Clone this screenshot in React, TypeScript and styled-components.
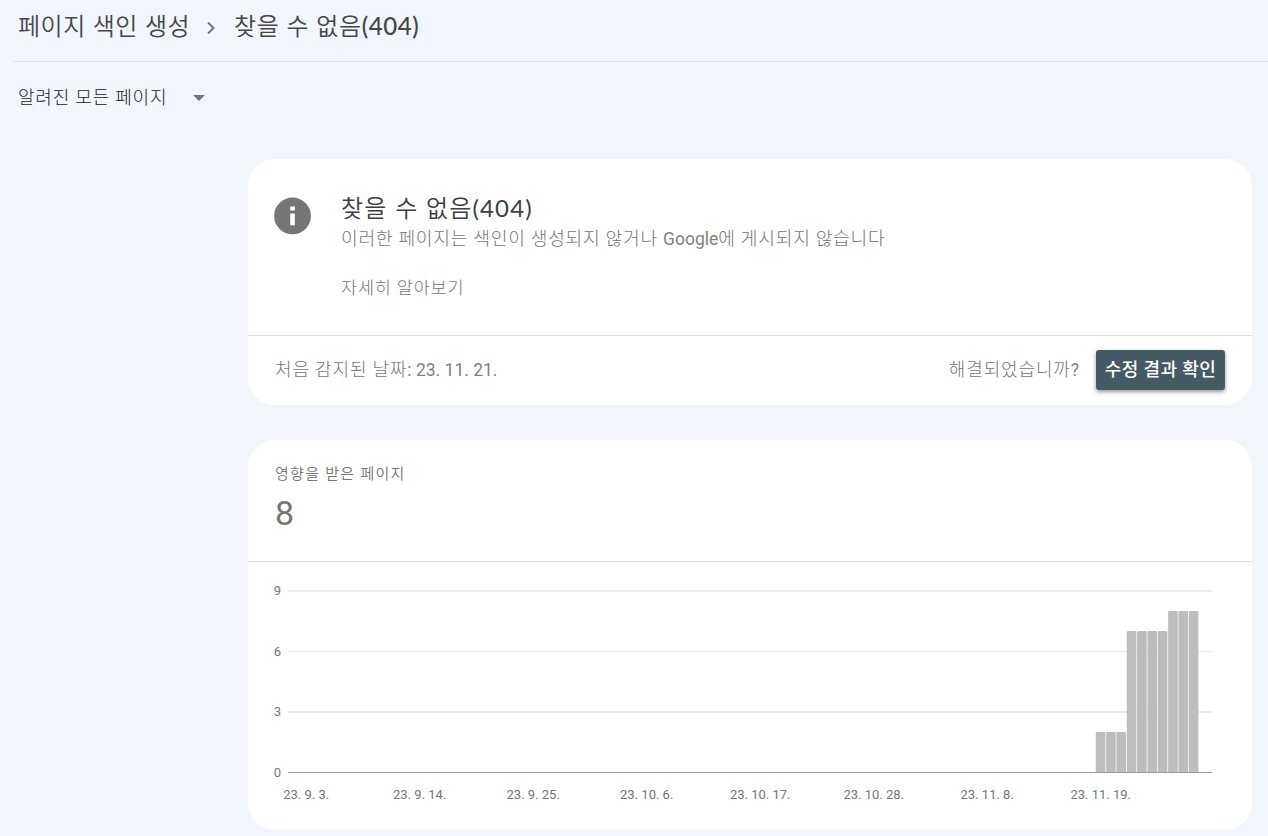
import React from 'react';
import styled, { createGlobalStyle } from 'styled-components';

const GlobalStyle = createGlobalStyle`
  * {
    box-sizing: border-box;
  }

  body {
    margin: 0;
    background: #f1f5fd;
    font-family: Roboto, 'Noto Sans CJK KR', sans-serif;
    color: #757575;
    overflow: hidden;
  }
`;

const Page = styled.div`
  height: 836px;
  overflow: hidden;
`;

const Header = styled.header`
  display: flex;
  align-items: center;
  height: 62px;
  margin-left: 13px;
  padding: 0 0 10px 5px;
  border-bottom: 1px solid #e0e2e6;
`;

const Crumb = styled.span<{ $current?: boolean }>`
  font-family: Lato, 'Noto Sans CJK KR', sans-serif;
  font-size: 24px;
  line-height: 36px;
  letter-spacing: ${props => (props.$current ? '0.6px' : '0.5px')};
  white-space: nowrap;
  color: #444746;
  font-weight: 350;
`;

const CrumbNumber = styled.span`
  font-weight: 500;
`;

const Chevron = styled.svg`
  margin: 4px 18px 0 16px;
`;

const Filter = styled.div`
  display: flex;
  align-items: center;
  height: 70px;
  padding-left: 18px;
`;

const FilterLabel = styled.span`
  margin-top: 1px;
  font-size: 18px;
  line-height: 26px;
  font-weight: 300;
  letter-spacing: 0.8px;
  color: #202124;
`;

const Caret = styled.svg`
  margin: 2px 0 0 26px;
`;

const Content = styled.main`
  display: flex;
  flex-direction: column;
  gap: 35px;
  width: 1004px;
  margin: 27px 0 0 248px;
`;

const Card = styled.section`
  background: #fff;
  border-radius: 27px;
  overflow: hidden;
`;

const Summary = styled.div`
  display: flex;
  height: 177px;
  padding: 32px 26px 0;
  border-bottom: 1px solid #e0e0e0;
`;

const InfoIcon = styled.svg`
  margin-top: 6px;
  margin-right: 30px;
`;

const Title = styled.h1`
  margin: 0;
  font-family: Lato, 'Noto Sans CJK KR', sans-serif;
  font-size: 24px;
  line-height: 34px;
  font-weight: 350;
  letter-spacing: 1.15px;
  color: #3c4043;
`;

const TitleNumber = styled.span`
  font-weight: 400;
`;

const Description = styled.p`
  margin: 0;
  font-size: 18.2px;
  line-height: 28px;
  font-weight: 300;
  letter-spacing: 0.7px;
`;

const Latin = styled.span`
  font-size: 17.5px;
  font-weight: 400;
  letter-spacing: 0;
  color: #808080;
`;

const LearnMore = styled.a`
  display: block;
  margin-top: 21px;
  font-size: 17.5px;
  line-height: 28px;
  font-weight: 300;
  letter-spacing: 0.8px;
`;

const StatusBar = styled.div`
  display: flex;
  align-items: center;
  height: 69px;
  padding: 0 27px 2px;
`;

const StatusText = styled.span`
  font-size: 18px;
  line-height: 28px;
  font-weight: 300;
  letter-spacing: 0.85px;
`;

const Question = styled(StatusText)`
  margin-left: auto;
  margin-right: 17px;
`;

const ValidateButton = styled.button`
  width: 129px;
  height: 40px;
  padding: 0;
  border: none;
  border-radius: 3px;
  background: #455a64;
  box-shadow: 0 2px 4px rgba(0, 0, 0, 0.4);
  color: #fff;
  font-family: Roboto, 'Noto Sans CJK KR', sans-serif;
  font-size: 18px;
  font-weight: 500;
  line-height: 38px;
  letter-spacing: 0.4px;
  white-space: nowrap;
`;

const Metric = styled.div`
  height: 122px;
  padding: 22px 27px 0;
  border-bottom: 1px solid #e0e0e0;
`;

const MetricLabel = styled.div`
  font-size: 15px;
  line-height: 24px;
  font-weight: 350;
  letter-spacing: 1.3px;
`;

const MetricValue = styled.div`
  margin-top: 6px;
  font-size: 34px;
  line-height: 42px;
`;

const ChartSvg = styled.svg`
  display: block;
`;

const AxisText = styled.text`
  font-family: Roboto, sans-serif;
  font-size: 13px;
  fill: #757575;
`;

const BASELINE = 210.5;
const UNIT = 20.2;

const gridLines = [
  { value: 9, y: 28, height: 2 },
  { value: 6, y: 89, height: 1 },
  { value: 3, y: 149, height: 2 },
];
const dates = ['23. 9. 3.', '23. 9. 14.', '23. 9. 25.', '23. 10. 6.', '23. 10. 17.', '23. 10. 28.', '23. 11. 8.', '23. 11. 19.'];
const pages = [2, 2, 2, 7, 7, 7, 7, 8, 8, 8];

const PagesChart: React.FC = () => (
  <ChartSvg width="1004" height="268" viewBox="0 0 1004 268">
    {gridLines.map(line => (
      <g key={line.value}>
        <rect x="40" y={line.y} width="924" height={line.height} fill="#ebebeb" />
        <AxisText x="33" y={line.y + 5} textAnchor="end">{line.value}</AxisText>
      </g>
    ))}
    {pages.map((count, index) => (
      <rect
        key={index}
        x={847.8 + index * 10.33}
        y={BASELINE - count * UNIT}
        width="9.6"
        height={count * UNIT}
        rx="1.2"
        fill="#bdbdbd"
      />
    ))}
    <rect x="40" y="210" width="924" height="1" fill="#999" />
    <AxisText x="33" y="215" textAnchor="end">0</AxisText>
    {dates.map((date, index) => (
      <AxisText key={date} x={58.2 + index * 113.5} y="237" textAnchor="middle">{date}</AxisText>
    ))}
  </ChartSvg>
);

const App: React.FC = () => {
  return (
    <Page>
      <GlobalStyle />
      <Header>
        <Crumb>페이지 색인 생성</Crumb>
        <Chevron width="10" height="14" viewBox="0 0 10 14" fill="none" stroke="#757575" strokeWidth="2">
          <path d="M2 1.5L7.5 7L2 12.5" />
        </Chevron>
        <Crumb $current>
          찾을 수 없음<CrumbNumber>(404)</CrumbNumber>
        </Crumb>
      </Header>
      <Filter>
        <FilterLabel>알려진 모든 페이지</FilterLabel>
        <Caret width="12" height="6" viewBox="0 0 12 6">
          <path d="M0 0H12L6 6Z" fill="#757575" />
        </Caret>
      </Filter>

      <Content>
        <Card>
          <Summary>
            <InfoIcon width="37" height="38" viewBox="0 0 37 38">
              <circle cx="18.5" cy="18.9" r="18.4" fill="#757575" />
              <path d="M16.2 9.6h4.6v3.8h-4.6zM16.2 16.6h4.6v11.6h-4.6z" fill="#fff" />
            </InfoIcon>
            <div>
              <Title>
                찾을 수 없음<TitleNumber>(404)</TitleNumber>
              </Title>
              <Description>
                이러한 페이지는 색인이 생성되지 않거나 <Latin>Google</Latin>에 게시되지 않습니다
              </Description>
              <LearnMore>자세히 알아보기</LearnMore>
            </div>
          </Summary>
          <StatusBar>
            <StatusText>
              처음 감지된 날짜<Latin>: 23. 11. 21.</Latin>
            </StatusText>
            <Question>
              해결되었습니까<Latin>?</Latin>
            </Question>
            <ValidateButton>수정 결과 확인</ValidateButton>
          </StatusBar>
        </Card>

        <Card>
          <Metric>
            <MetricLabel>영향을 받은 페이지</MetricLabel>
            <MetricValue>8</MetricValue>
          </Metric>
          <PagesChart />
        </Card>
      </Content>
    </Page>
  );
};

export default App;
